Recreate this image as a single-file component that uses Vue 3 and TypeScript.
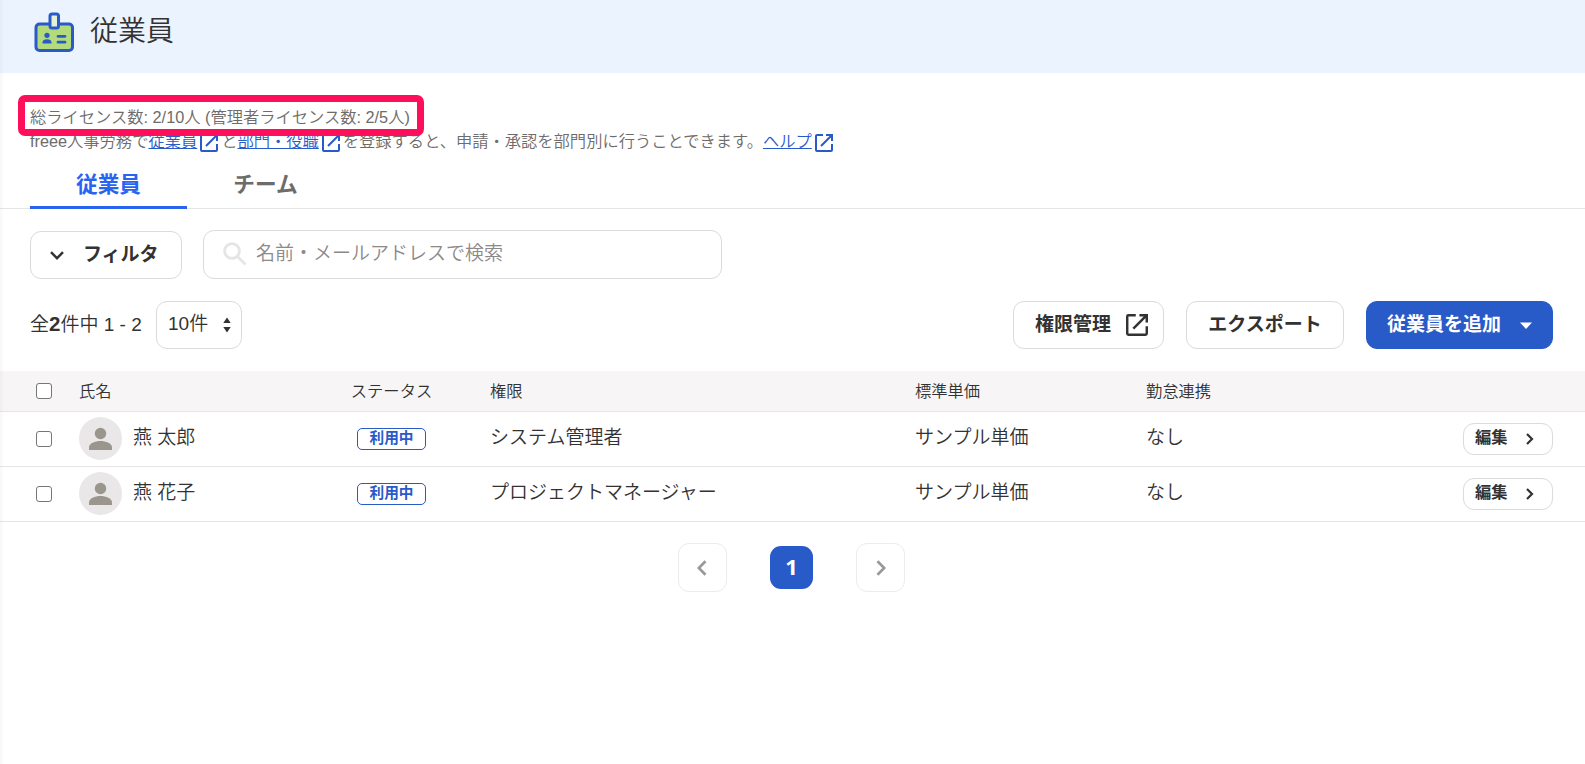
<script setup lang="ts">
interface Employee {
  id: number
  name: string
  status: string
  role: string
  price: string
  attendance: string
}

const employees: Employee[] = [
  { id: 1, name: '燕 太郎', status: '利用中', role: 'システム管理者', price: 'サンプル単価', attendance: 'なし' },
  { id: 2, name: '燕 花子', status: '利用中', role: 'プロジェクトマネージャー', price: 'サンプル単価', attendance: 'なし' },
]

const extFrame = 'M8 1H2a1 1 0 0 0-1 1v14a1 1 0 0 0 1 1h14a1 1 0 0 0 1-1v-6'
const extArrow = 'M11 1h6v6M17 1L6 12'
</script>

<template>
  <div class="page">
    <header class="header">
      <svg class="logo" width="40" height="40" viewBox="0 0 40 40">
        <rect x="2" y="12" width="36.5" height="26.5" rx="3.5" fill="#b4db7b" stroke="#285ac8" stroke-width="3" />
        <rect x="16" y="2" width="8.500" height="14" rx="2" fill="#e6f0d6" stroke="#285ac8" stroke-width="3" />
        <circle cx="13" cy="23.300" r="2.600" fill="#285ac8" />
        <path d="M8.500 31.500v-1c0-2.300 2-3.200 4.500-3.200s4.500.9 4.500 3.200v1z" fill="#285ac8" />
        <path d="M24 24.300h7M24 30.200h7" stroke="#285ac8" stroke-width="2.800" stroke-linecap="round" />
      </svg>
      <h1>従業員</h1>
    </header>

    <section class="intro">
      <p><span class="license">総ライセンス数: 2/10人 (管理者ライセンス数: 2/5人)<i class="highlight" /></span></p>
      <p class="guide">
        <span>freee人事労務で</span><a>従業員</a>
        <svg class="ext" viewBox="0 0 18 18"><path :d="extFrame" /><path :d="extArrow" /></svg>
        <span>と</span><a>部門・役職</a>
        <svg class="ext" viewBox="0 0 18 18"><path :d="extFrame" /><path :d="extArrow" /></svg>
        <span>を登録すると、申請・承認を部門別に行うことできます。</span><a>ヘルプ</a>
        <svg class="ext" viewBox="0 0 18 18"><path :d="extFrame" /><path :d="extArrow" /></svg>
      </p>
    </section>

    <nav class="tabs">
      <div class="tab active">従業員</div>
      <div class="tab">チーム</div>
    </nav>

    <div class="filters">
      <button class="btn filter">
        <svg width="14" height="9" viewBox="0 0 14 9"><path d="M1 1.200l6 6 6-6" fill="none" stroke="#323232" stroke-width="2.400" /></svg>
        <span>フィルタ</span>
      </button>
      <div class="search">
        <svg width="24" height="24" viewBox="0 0 24 24"><circle cx="9" cy="9" r="7.400" /><path d="M14.500 14.500l8 8" /></svg>
        <span>名前・メールアドレスで検索</span>
      </div>
    </div>

    <div class="toolbar">
      <span class="count">全<b>2</b>件中 1 - 2</span>
      <div class="select">
        <span>10件</span>
        <svg width="8" height="16" viewBox="0 0 8 16"><path d="M4 .5L7.700 6H.3zM4 15.500L.3 10h7.400z" fill="#323232" /></svg>
      </div>
      <div class="actions">
        <button class="btn manage">
          <span>権限管理</span>
          <svg class="ext dark" viewBox="0 0 18 18"><path :d="extFrame" /><path :d="extArrow" /></svg>
        </button>
        <button class="btn export"><span>エクスポート</span></button>
        <button class="btn primary">
          <span>従業員を追加</span>
          <svg width="12" height="7" viewBox="0 0 12 7"><path d="M0 .5h12L6 7z" fill="#fff" /></svg>
        </button>
      </div>
    </div>

    <div class="table">
      <div class="row head">
        <i class="check" />
        <span>氏名</span>
        <span class="center">ステータス</span>
        <span>権限</span>
        <span>標準単価</span>
        <span>勤怠連携</span>
      </div>
      <div v-for="e in employees" :key="e.id" class="row">
        <i class="check" />
        <div class="person">
          <svg width="43" height="43" viewBox="0 0 43 43">
            <circle cx="21.500" cy="21.500" r="21.500" fill="#e9e7e7" />
            <circle cx="21.500" cy="16.500" r="5.700" fill="#9b968d" />
            <path d="M10 33v-2.500c0-4.200 6-6.400 11.500-6.400s11.500 2.200 11.500 6.400v2.500z" fill="#9b968d" />
          </svg>
          <span class="text">{{ e.name }}</span>
        </div>
        <div class="center"><span class="badge">{{ e.status }}</span></div>
        <span class="text">{{ e.role }}</span>
        <span class="text">{{ e.price }}</span>
        <span class="text">{{ e.attendance }}</span>
        <button class="btn edit">
          <span>編集</span>
          <svg width="8" height="12" viewBox="0 0 8 12"><path d="M1 1l5 5-5 5" fill="none" stroke="#323232" stroke-width="2.200" /></svg>
        </button>
      </div>
    </div>

    <nav class="pager">
      <span class="page-btn"><svg width="10" height="16" viewBox="0 0 10 16"><path d="M8.500 1.200L1.800 8l6.700 6.800" /></svg></span>
      <span class="current">1</span>
      <span class="page-btn"><svg width="10" height="16" viewBox="0 0 10 16"><path d="M1.500 1.200L8.200 8l-6.700 6.800" /></svg></span>
    </nav>
  </div>
</template>

<style>
body { background: #fff; overflow: hidden; }
</style>

<style scoped>
.page {
  position: relative;
  width: 1585px;
  height: 764px;
  overflow: hidden;
  box-sizing: border-box;
  background: #fff;
  color: #323232;
  font-family: "Liberation Sans", "Noto Sans CJK JP", sans-serif;
  font-size: 19px;
  font-weight: 350;
}
.page::after {
  content: "";
  position: absolute;
  inset: 0 auto 0 0;
  width: 4px;
  background: linear-gradient(90deg, rgba(0, 0, 0, 0.03), rgba(0, 0, 0, 0));
}
.page * { box-sizing: border-box; }
.header {
  display: flex;
  height: 73px;
  padding: 12px 0 0 34px;
  background: #ebf3ff;
}
.logo { flex: none; }
h1 {
  margin: 5px 0 0 16px;
  font-size: 28px;
  line-height: 30px;
  font-weight: 350;
}
.intro {
  height: 94px;
  padding: 32px 0 0 30px;
  color: #6e6b6b;
  font-size: 16.270px;
  line-height: 24px;
}
.intro p { margin: 0; height: 24px; white-space: nowrap; }
.license { position: relative; display: inline-block; }
.highlight {
  position: absolute;
  left: -12px;
  top: -10px;
  width: 406px;
  height: 41px;
  border: 7px solid #ff0f5b;
  border-radius: 7px;
}
.guide { display: flex; }
.guide a { color: #285ac8; text-decoration: underline; }
.ext {
  flex: none;
  width: 18px;
  height: 18px;
  margin: 5px 3px 0;
  fill: none;
  stroke: #285ac8;
  stroke-width: 2;
}
.tabs {
  display: flex;
  height: 42px;
  padding-left: 30px;
  border-bottom: 1px solid #e6e4e4;
}
.tab {
  width: 157px;
  height: 42px;
  padding-top: 1px;
  border-bottom: 3px solid transparent;
  color: #6e6b6b;
  font-size: 21.670px;
  line-height: 33px;
  font-weight: 700;
  text-align: center;
}
.tab.active { color: #2864f0; border-color: #2864f0; }
.btn {
  display: flex;
  align-items: center;
  height: 48px;
  margin: 0;
  padding: 0;
  border: 1px solid #dcdada;
  border-radius: 11px;
  background: #fff;
  color: #323232;
  font: 700 19px/28px "Liberation Sans", "Noto Sans CJK JP", sans-serif;
  white-space: nowrap;
}
.filters { display: flex; align-items: flex-end; gap: 21px; height: 70px; padding-left: 30px; }
.filter { width: 152px; padding-left: 19px; gap: 19px; }
.search {
  display: flex;
  width: 519px;
  height: 49px;
  padding: 11px 0 0 19px;
  gap: 9px;
  border: 1px solid #dcdada;
  border-radius: 11px;
  color: #8c8989;
  line-height: 24px;
}
.search svg { fill: none; stroke: #e6e4e4; stroke-width: 2.700; }
.toolbar { display: flex; align-items: center; height: 48px; margin-top: 22px; padding: 0 32px 0 30px; }
.count { position: relative; top: -1px; width: 126px; line-height: 28px; white-space: nowrap; }
.count b { font-size: 20.500px; font-weight: 700; }
.select {
  display: flex;
  align-items: center;
  justify-content: space-between;
  width: 86px;
  height: 48px;
  padding: 0 10px 0 11px;
  border: 1px solid #dcdada;
  border-radius: 11px;
}
.select span { position: relative; top: -1px; line-height: 28px; }
.actions { display: flex; gap: 22px; margin-left: auto; }
.manage { width: 151px; padding-left: 21px; gap: 15px; }
.ext.dark { width: 22px; height: 22px; margin: 0; stroke: #323232; }
.export { width: 158px; justify-content: center; }
.primary { width: 187px; padding-left: 20px; gap: 19px; background: #285ac8; border-color: #285ac8; color: #fff; }
.table { margin-top: 22px; }
.row {
  display: grid;
  grid-template-columns: 43px 257px 154px 425px 231px 317px 90px;
  align-items: center;
  height: 55px;
  padding-left: 36px;
  border-bottom: 1px solid #e6e4e4;
}
.row.head { height: 41px; background: #f7f5f5; font-size: 16.270px; line-height: 24px; }
.check {
  width: 16px;
  height: 16px;
  border: 1.500px solid #767676;
  border-radius: 3px;
  background: #fff;
}
.center { display: flex; justify-content: center; padding-right: 43px; white-space: nowrap; }
.person { display: flex; align-items: center; gap: 11px; }
.person svg { position: relative; top: -1px; }
.text { position: relative; top: -1px; line-height: 28px; white-space: nowrap; }
.badge {
  width: 69px;
  height: 22px;
  border: 1px solid #285ac8;
  border-radius: 5px;
  color: #285ac8;
  font-size: 14.670px;
  line-height: 18px;
  font-weight: 700;
  text-align: center;
}
.btn.edit { width: 90px; height: 32px; padding-left: 11px; gap: 18px; font-size: 16.270px; line-height: 24px; }
.btn.edit span { position: relative; top: -2px; }
.pager { display: flex; align-items: center; justify-content: center; gap: 43px; margin: 21px 2px 0 0; }
.page-btn {
  display: flex;
  align-items: center;
  justify-content: center;
  width: 49px;
  height: 49px;
  border: 1px solid #ececec;
  border-radius: 11px;
}
.page-btn svg { fill: none; stroke: #999; stroke-width: 2.700; }
.page-btn:first-child svg { margin-right: 2px; }
.current {
  width: 43px;
  height: 43px;
  border-radius: 11px;
  background: #285ac8;
  color: #fff;
  font-family: "Open Sans", sans-serif;
  font-size: 22px;
  line-height: 41px;
  font-weight: 700;
  text-align: center;
}
</style>
